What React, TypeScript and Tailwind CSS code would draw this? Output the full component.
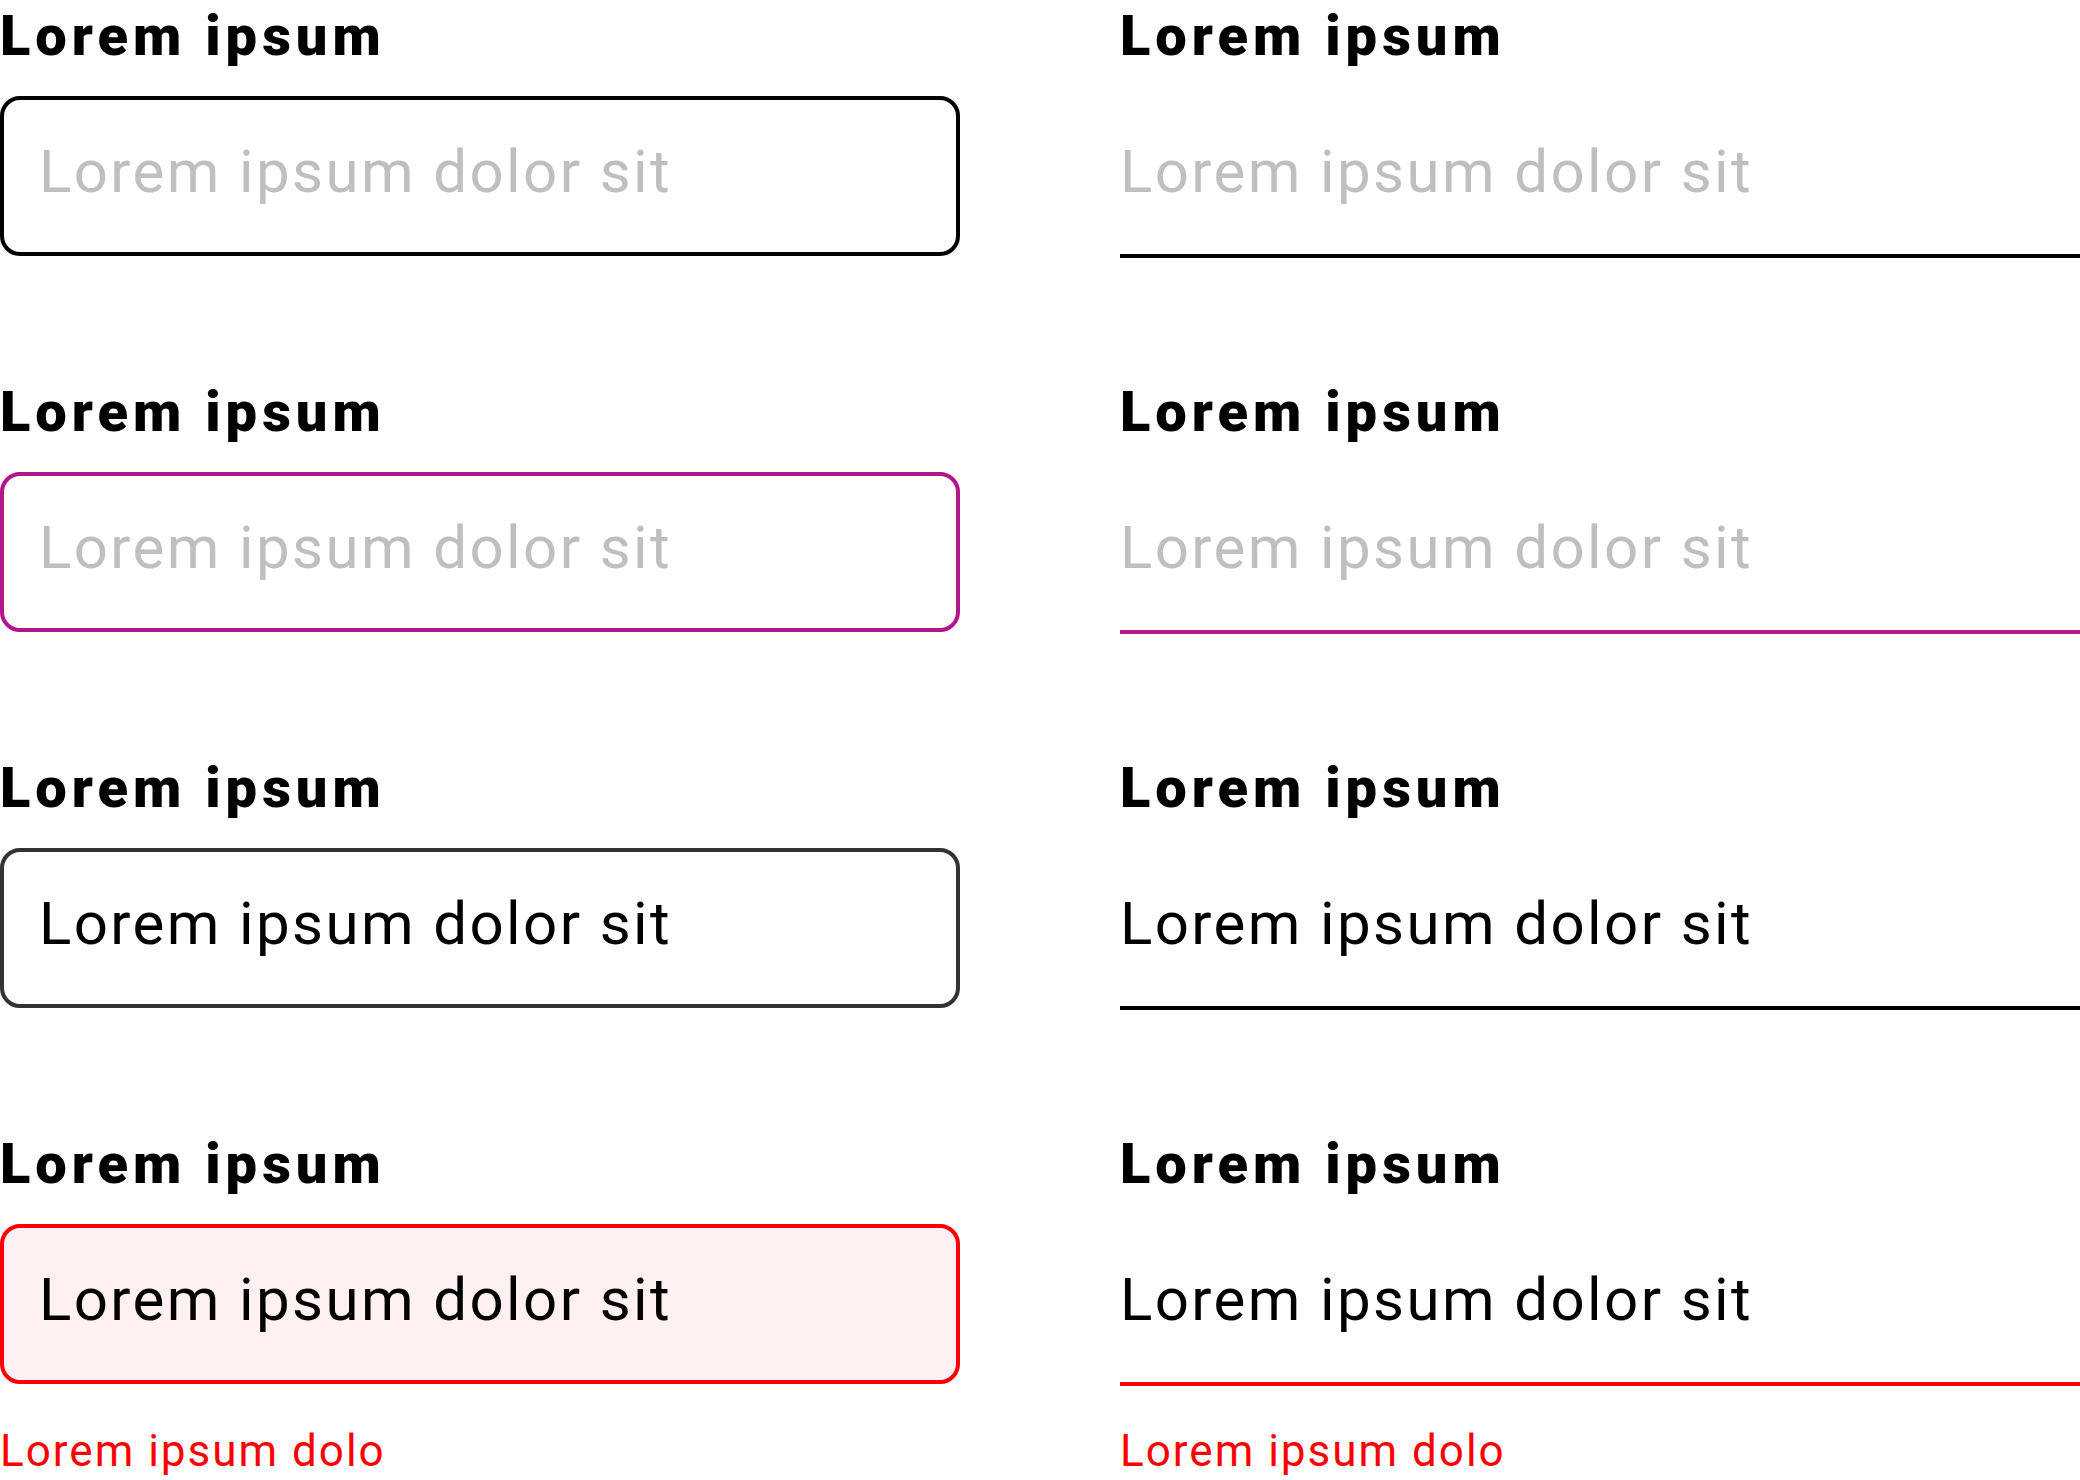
import React from "react";

type Field = {
  value?: string;
  state: "idle" | "focus" | "filled" | "error";
};

const FIELDS: Field[] = [
  { state: "idle" },
  { state: "focus" },
  { state: "filled", value: "Lorem ipsum dolor sit" },
  { state: "error", value: "Lorem ipsum dolor sit" },
];

const boxBorder = {
  idle: "border-black",
  focus: "border-[#b3168b]",
  filled: "border-[#333333]",
  error: "border-[#ff0000] bg-[#fff0f1]",
};

const lineBorder = {
  idle: "border-black",
  focus: "border-[#b3168b]",
  filled: "border-black",
  error: "border-[#ff0000]",
};

function Label() {
  return (
    <label className="block pt-[2px] text-[56px] leading-[68px] font-black tracking-[5px] text-black mb-[26px]">
      Lorem ipsum
    </label>
  );
}

function ErrorText({ className }: { className: string }) {
  return (
    <p className={`text-[44px] leading-[52px] tracking-[2px] text-[#ff0000] ${className}`}>
      Lorem ipsum dolo
    </p>
  );
}

function BoxInput({ field }: { field: Field }) {
  return (
    <div>
      <Label />
      <input
        readOnly
        placeholder="Lorem ipsum dolor sit"
        defaultValue={field.value}
        className={`block w-full h-[160px] border-4 rounded-[20px] pl-[35px] pb-[9px] text-[60px] tracking-[2.4px] text-black placeholder:text-[#bfbfbf] outline-none ${boxBorder[field.state]}`}
      />
      {field.state === "error" && <ErrorText className="mt-[41px]" />}
    </div>
  );
}

function LineInput({ field }: { field: Field }) {
  return (
    <div>
      <Label />
      <input
        readOnly
        placeholder="Lorem ipsum dolor sit"
        defaultValue={field.value}
        className={`block w-full h-[162px] border-b-[4px] pb-[7px] text-[60px] tracking-[2.4px] text-black placeholder:text-[#bfbfbf] outline-none bg-transparent ${lineBorder[field.state]}`}
      />
      {field.state === "error" && <ErrorText className="mt-[39px]" />}
    </div>
  );
}

export default function App() {
  return (
    <div
      className="w-[2080px] h-[1480px] bg-white overflow-hidden grid grid-cols-[960px_960px] gap-x-[160px]"
      style={{ fontFamily: "Roboto, 'Liberation Sans', sans-serif" }}
    >
      <div className="flex flex-col gap-[120px]">
        {FIELDS.map((f, i) => (
          <BoxInput key={i} field={f} />
        ))}
      </div>
      <div className="flex flex-col gap-[118px]">
        {FIELDS.map((f, i) => (
          <LineInput key={i} field={f} />
        ))}
      </div>
    </div>
  );
}
